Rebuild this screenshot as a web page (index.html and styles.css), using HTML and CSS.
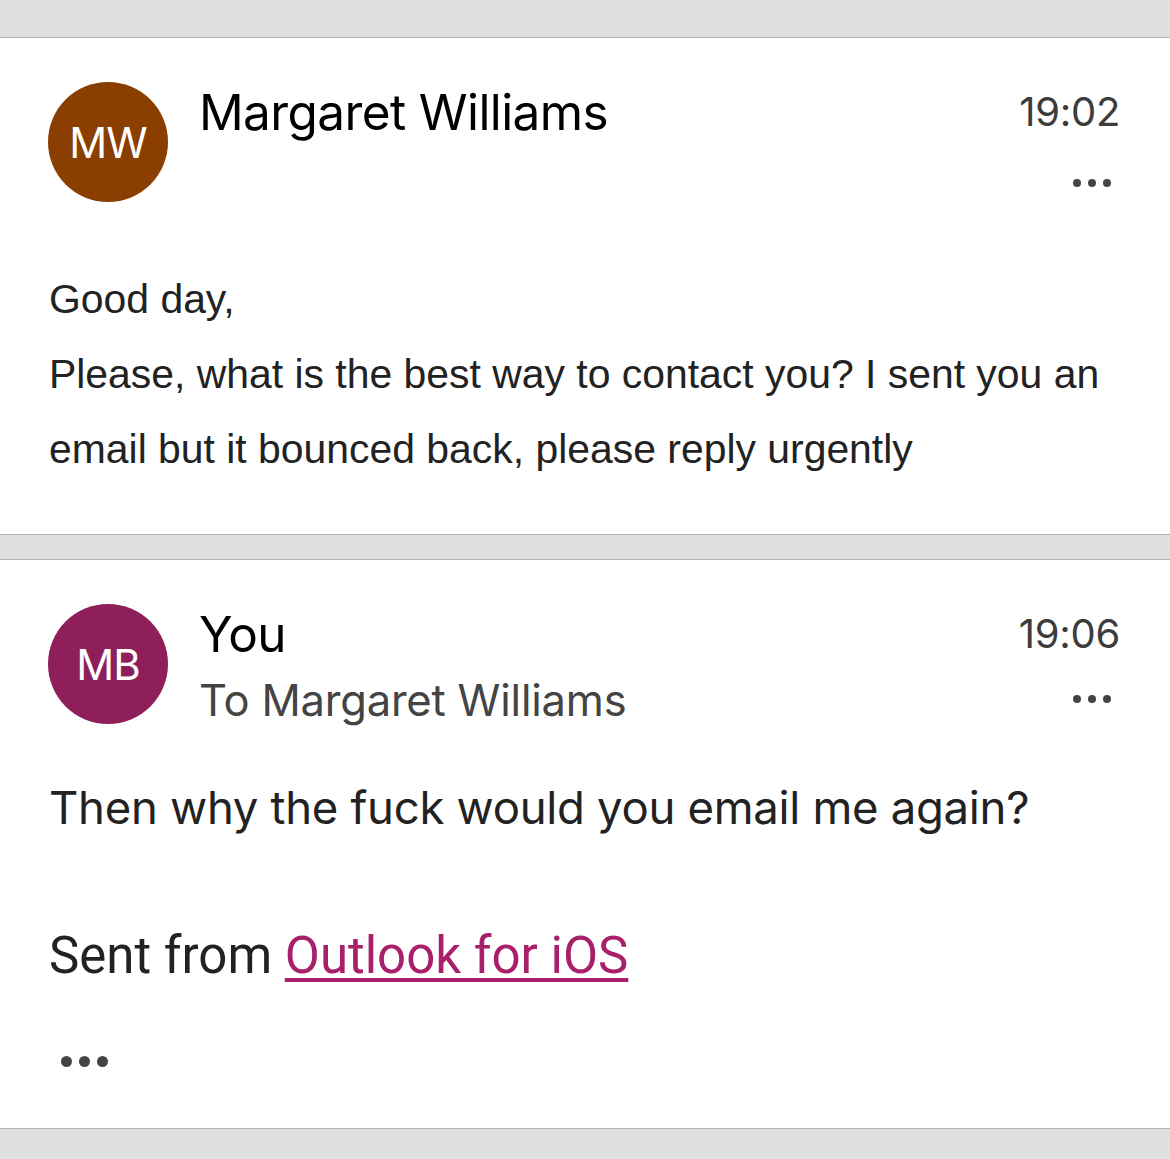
FILE: index.html
```html
<!DOCTYPE html>
<html>
<head>
<meta charset="utf-8">
<link rel="stylesheet" href="styles.css">
</head>
<body>
<div class="gap gap-top"></div>
<section class="card card-first">
  <div class="head">
    <div class="avatar avatar-mw">MW</div>
    <div class="who">
      <div class="name">Margaret Williams</div>
    </div>
    <div class="meta">
      <div class="time">19:02</div>
      <div class="more"><span></span><span></span><span></span></div>
    </div>
  </div>
  <div class="body-plain">
    <p>Good day,</p>
    <p>Please, what is the best way to contact you? I sent you an email but it bounced back, please reply urgently</p>
  </div>
</section>
<div class="gap gap-mid"></div>
<section class="card card-second">
  <div class="head">
    <div class="avatar avatar-mb">MB</div>
    <div class="who">
      <div class="name">You</div>
      <div class="to">To Margaret Williams</div>
    </div>
    <div class="meta">
      <div class="time">19:06</div>
      <div class="more more-second"><span></span><span></span><span></span></div>
    </div>
  </div>
  <div class="reply">Then why the fuck would you email me again?</div>
  <div class="sig">Sent from <a href="#">Outlook for iOS</a></div>
  <div class="quoted"><span></span><span></span><span></span></div>
</section>
<div class="gap gap-bottom"></div>
</body>
</html>
```
FILE: styles.css
```css
html, body {
  margin: 0;
  padding: 0;
  background: #e0e0e0;
}
body {
  width: 1170px;
  height: 1159px;
  overflow: hidden;
  font-family: "Inter", "Liberation Sans", sans-serif;
}
.gap-top { height: 37px; }
.gap-mid { height: 24px; }
.gap-bottom { height: 40px; }

.card {
  background: #ffffff;
  border-top: 1px solid #b4b4b4;
  border-bottom: 1px solid #b4b4b4;
  box-sizing: border-box;
}
.card-first { height: 498px; }
.card-second { height: 570px; }

.head {
  display: flex;
  align-items: flex-start;
  padding: 44px 50px 0 48px;
}
.avatar {
  flex: none;
  width: 120px;
  height: 120px;
  border-radius: 50%;
  color: #fff;
  display: flex;
  align-items: center;
  justify-content: center;
  font-size: 42px;
  letter-spacing: -1px;
}
.avatar-mw { background: #8a3e00; }
.avatar-mb { background: #8e1f5a; }

.who {
  flex: 1;
  margin-left: 31px;
}
.name {
  font-size: 49.5px;
  line-height: 60px;
  color: #000;
  letter-spacing: -0.6px;
}
.to {
  font-size: 43.5px;
  line-height: 60px;
  color: #444;
  margin-top: 6px;
  letter-spacing: -0.2px;
}
.meta {
  display: flex;
  flex-direction: column;
  align-items: flex-end;
}
.time {
  font-size: 40px;
  line-height: 60px;
  color: #3c3c3c;
  letter-spacing: -0.3px;
}
.more {
  display: flex;
  gap: 7px;
  margin-top: 37px;
  margin-right: 9px;
}
.more span {
  width: 8px;
  height: 8px;
  border-radius: 50%;
  background: #444;
}
.more-second { margin-top: 31px; }

.body-plain {
  margin: 60px 0 0 49px;
  font-family: "Liberation Sans", Arial, sans-serif;
  font-size: 40.9px;
  line-height: 75px;
  color: #222;
  width: 1100px;
}
.body-plain p { margin: 0; }

.reply {
  margin: 48px 0 0 49px;
  font-family: "Inter", "Liberation Sans", sans-serif;
  font-size: 45.5px;
  line-height: 60px;
  color: #222;
  letter-spacing: -0.3px;
}
.sig {
  margin: 88px 0 0 49px;
  font-family: "Roboto", "Liberation Sans", sans-serif;
  font-size: 51px;
  line-height: 60px;
  color: #222;
  letter-spacing: 0;
}
.sig a {
  color: #a8206a;
  text-decoration: underline;
  text-decoration-thickness: 4px;
  text-underline-offset: 5px;
}
.quoted {
  display: flex;
  gap: 7px;
  margin: 70px 0 0 61px;
}
.quoted span {
  width: 11px;
  height: 11px;
  border-radius: 50%;
  background: #444;
}
```
